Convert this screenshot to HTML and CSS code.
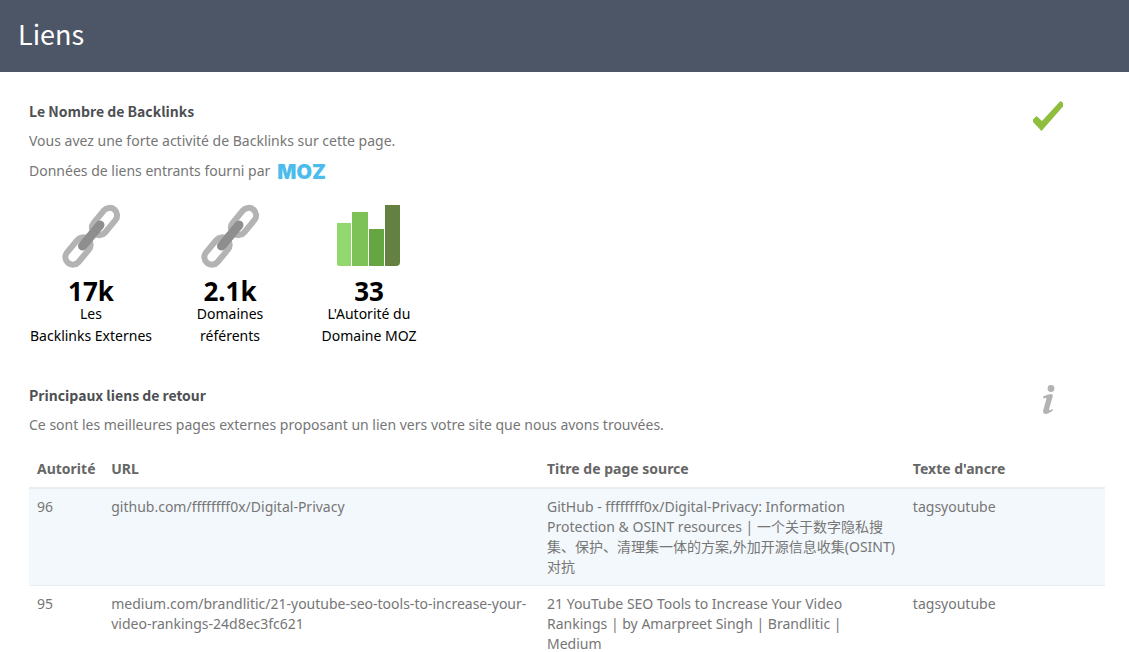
FILE: index.html
```html
<!DOCTYPE html>
<html lang="fr">
<head>
<meta charset="utf-8">
<meta name="viewport" content="width=device-width, initial-scale=1">
<title>Liens</title>
<link rel="stylesheet" href="styles.css">
</head>
<body>
<header class="banner"><h1 class="banner-title">Liens</h1></header>
<main class="content">
  <svg class="symbols" width="0" height="0" aria-hidden="true">
    <symbol id="chain" viewBox="0 0 60 66">
      <g fill="none" stroke="#b3b3b3" stroke-width="6">
        <rect x="-15.5" y="-7.5" width="31" height="15" rx="7.5" transform="translate(43.500 18.500) rotate(-50)"/>
        <rect x="-15.5" y="-7.5" width="31" height="15" rx="7.5" transform="translate(17 48) rotate(-50)"/>
      </g>
      <path d="M21.500 43L39 22" stroke="#8e8e8e" stroke-width="9" stroke-linecap="round"/>
    </symbol>
  </svg>
  <section class="block">
    <div class="block-text">
      <h2 class="block-title">Le Nombre de Backlinks</h2>
      <p class="note">Vous avez une forte activité de Backlinks sur cette page.</p>
      <p class="note provider">Données de liens entrants fourni par <span class="moz">MOZ</span></p>
      <div class="stats">
        <div class="stat">
          <svg class="stat-icon" viewBox="0 0 60 66" aria-hidden="true"><use href="#chain"/></svg>
          <strong class="stat-value">17k</strong>
          <span class="stat-label">Les<br>Backlinks Externes</span>
        </div>
        <div class="stat">
          <svg class="stat-icon" viewBox="0 0 60 66" aria-hidden="true"><use href="#chain"/></svg>
          <strong class="stat-value">2.1k</strong>
          <span class="stat-label">Domaines<br>référents</span>
        </div>
        <div class="stat">
          <svg class="stat-icon" viewBox="1 0 64 66" aria-hidden="true">
            <path fill="#92d86e" d="M0 20h15v43H4q-4 0-4-4z"/>
            <path fill="#7dc257" d="M16 9h16v54H16z"/>
            <path fill="#65a542" d="M33 26h15v37H33z"/>
            <path fill="#648141" d="M49 2h15v57q0 4-4 4H49z"/>
          </svg>
          <strong class="stat-value">33</strong>
          <span class="stat-label">L'Autorité du<br>Domaine MOZ</span>
        </div>
      </div>
    </div>
    <div class="status">
      <svg width="32" height="32" viewBox="0 0 32 32" role="img" aria-label="Réussi"><path fill="#8fbe3e" d="M1 19.500L4.500 16L10 21L27.500 2Q28.500 1 29.500 1.500L31 3V6.500L9.500 31L1 22z"/></svg>
    </div>
  </section>

  <section class="block">
    <div class="block-text">
      <h2 class="block-title">Principaux liens de retour</h2>
      <p class="note">Ce sont les meilleures pages externes proposant un lien vers votre site que nous avons trouvées.</p>
    </div>
    <div class="status">
      <svg width="14" height="32" viewBox="0 0 14 32" role="img" aria-label="Information"><g fill="#b3b3b3"><circle cx="10" cy="4.500" r="3.400"/><path d="M2 12.500Q5.500 10.500 10 10Q12.300 10 11.700 12.500L8.200 24.500Q7.700 26.500 9 26.200Q10 26 11.300 25L12 26.500Q8 29.500 5 30Q1.300 30 2.300 26L5.500 14.500Q5.500 13.500 2.500 14.500z"/></g></svg>
    </div>
  </section>

  <table class="links">
    <colgroup><col class="col-rank"><col class="col-url"><col class="col-title"><col class="col-anchor"></colgroup>
    <thead>
      <tr><th scope="col">Autorité</th><th scope="col">URL</th><th scope="col">Titre de page source</th><th scope="col">Texte d'ancre</th></tr>
    </thead>
    <tbody>
      <tr><td>96</td><td>github.com/ffffffff0x/Digital-Privacy</td><td>GitHub - ffffffff0x/Digital-Privacy: Information Protection &amp; OSINT resources | 一个关于数字隐私搜集、保护、清理集一体的方案,外加开源信息收集(OSINT)对抗</td><td>tagsyoutube</td></tr>
      <tr><td>95</td><td>medium.com/brandlitic/21-youtube-seo-tools-to-increase-your-video-rankings-24d8ec3fc621</td><td>21 YouTube SEO Tools to Increase Your Video Rankings | by Amarpreet Singh | Brandlitic | Medium</td><td>tagsyoutube</td></tr>
    </tbody>
  </table>
</main>
</body>
</html>
```
FILE: styles.css
```css
* { box-sizing: border-box; }
body {
  margin: 0;
  background: #fff;
  color: #767676;
  font: 14px/20px "Noto Sans", "Noto Sans CJK SC", sans-serif;
}
.banner { background: #4d5667; padding: 14px 18px 18px; }
.banner-title {
  margin: 0;
  color: #fff;
  font: 400 27px/40px "Noto Sans CJK SC", sans-serif;
}
.content { padding: 28px 24px 0 29px; }
.symbols { position: absolute; }
.block { display: flex; margin-bottom: 37px; }
.block + .block { margin-bottom: 7px; }
.block-text { flex: 1; }
.block-title {
  margin: 0;
  padding: 1px 0 9px;
  color: #4d4f52;
  font: 600 14px/20px "Noto Sans CJK SC", sans-serif;
}
.note { margin: 0 0 8px; line-height: 22px; }
.provider { display: flex; align-items: center; gap: 7px; margin-bottom: 21px; }
.moz { padding-top: 2px; color: #4dbcec; font: 900 20px/20px Inter, sans-serif; }
.status { width: 114px; display: flex; justify-content: center; align-items: flex-start; }
.stats { display: flex; gap: 15px; color: #000; }
.stat { width: 124px; display: flex; flex-direction: column; align-items: center; text-align: center; }
.stat-icon { height: 66px; }
.stat-value { padding-top: 10px; font-size: 26px; line-height: 24px; }
.stat-label { line-height: 22px; white-space: nowrap; }
.links { width: 100%; border-collapse: separate; border-spacing: 0; table-layout: fixed; }
.col-rank { width: 6.9%; }
.col-url { width: 40.5%; }
.col-title { width: 34%; }
.col-anchor { width: 18.6%; }
.links th, .links td { padding: 8px; text-align: left; vertical-align: top; }
.links th { color: #666; font-weight: 700; border-bottom: 2px solid #e9edf0; white-space: nowrap; }
.links tbody tr:nth-child(odd) td { background: #f3f8fc; }
.links tbody tr + tr td { border-top: 1px solid #e9edf0; }
```
